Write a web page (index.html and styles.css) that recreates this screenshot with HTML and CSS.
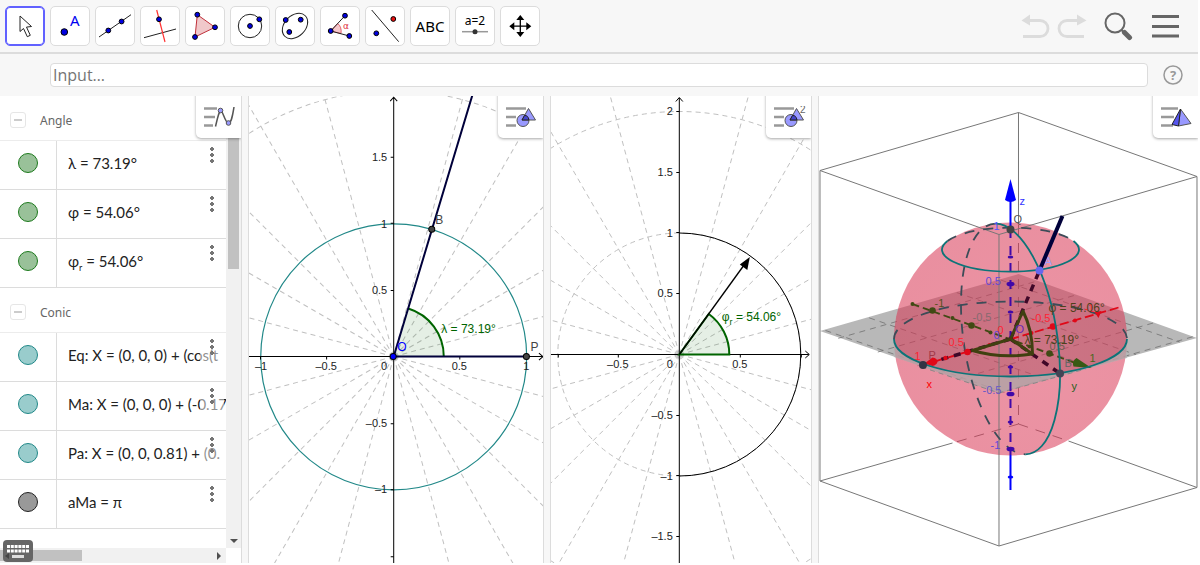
FILE: index.html
```
<!DOCTYPE html>
<html lang="en">

<head>
    <title>Latitude and longitude</title>
    <meta charset="UTF-8">
    <meta name="viewport" content="width=device-width, initial-scale=1.0">
    <link rel="stylesheet" href="styles.css">
</head>

<body>
    <header class="toolbar">
        <nav class="tools">
            <button class="tool selected" aria-label="Move"><svg viewBox="1 1 38 38">
                    <path d="M15 10v15.500l3.500-3 3.800 8.200 3-1.400-3.800-8.200 5-.6z" fill="#fff" stroke="#222" />
                </svg></button>
            <button class="tool" aria-label="Point"><svg viewBox="1 1 38 38">
                    <circle class="dot" cx="14.300" cy="26" r="3.300" />
                    <text x="20" y="20" class="tool-a">A</text>
                </svg></button>
            <button class="tool" aria-label="Line"><svg viewBox="1 1 38 38">
                    <path class="thin" d="M4 31 36 8.700" />
                    <circle class="dot" cx="13.300" cy="24.500" r="2.400" />
                    <circle class="dot" cx="26.600" cy="15.500" r="2.400" />
                </svg></button>
            <button class="tool" aria-label="Perpendicular line"><svg viewBox="1 1 38 38">
                    <path class="thin" d="M4 31.700 36 23" />
                    <path d="M16.700 4 25 36" stroke="#f33" stroke-width="1.200" />
                    <circle class="dot" cx="19" cy="13.300" r="2.400" />
                </svg></button>
            <button class="tool" aria-label="Polygon"><svg viewBox="1 1 38 38">
                    <path d="M12.300 8.700 30 21.300 10 31z" fill="#f0c8ca" stroke="#c0303a" />
                    <circle class="dot" cx="12.300" cy="8.700" r="2.400" />
                    <circle class="dot" cx="30" cy="21.300" r="2.400" />
                    <circle class="dot" cx="10" cy="31" r="2.400" />
                </svg></button>
            <button class="tool" aria-label="Circle with center"><svg viewBox="1 1 38 38">
                    <circle class="thin" cx="20" cy="20" r="11.700" />
                    <circle class="dot" cx="20" cy="20" r="2.400" />
                    <circle class="dot" cx="29.300" cy="13.300" r="2.400" />
                </svg></button>
            <button class="tool" aria-label="Ellipse"><svg viewBox="1 1 38 38">
                    <ellipse class="thin" cx="20" cy="20" rx="14.500" ry="10.500" transform="rotate(-45 20 20)" />
                    <circle class="dot" cx="10.700" cy="14" r="2.400" />
                    <circle class="dot" cx="14.300" cy="26" r="2.400" />
                    <circle class="dot" cx="25.700" cy="13.700" r="2.400" />
                </svg></button>
            <button class="tool" aria-label="Angle"><svg viewBox="1 1 38 38">
                    <path d="M10.700 25 17.700 17.500Q22 21 21 27.500z" fill="#f6c8cc" stroke="#e0404c" stroke-width=".8" />
                    <path class="thin" d="M25 9.700 10.700 25 29.300 30" />
                    <circle class="dot" cx="10.700" cy="25" r="2.400" />
                    <circle class="dot" cx="25" cy="9.700" r="2.400" />
                    <circle class="dot" cx="29.300" cy="30" r="2.400" />
                    <text x="23" y="23" class="tool-alpha">α</text>
                </svg></button>
            <button class="tool" aria-label="Reflect about line"><svg viewBox="1 1 38 38">
                    <path class="thin" d="M6.700 4 33.700 35.700" />
                    <circle class="dot" cx="11.300" cy="27.300" r="2.400" />
                    <circle class="dot red" cx="28.300" cy="13" r="2.400" />
                </svg></button>
            <button class="tool" aria-label="Text"><svg viewBox="1 1 38 38">
                    <text x="20" y="26" class="tool-abc">ABC</text>
                </svg></button>
            <button class="tool" aria-label="Slider"><svg viewBox="1 1 38 38">
                    <text x="20" y="19" class="tool-slider">a=2</text>
                    <path d="M7 25.700H33" stroke="#999" stroke-width="1.500" />
                    <circle cx="20" cy="25.700" r="2.500" fill="#333" />
                </svg></button>
            <button class="tool" aria-label="Move graphics view"><svg viewBox="1 1 38 38">
                    <path d="M20.300 12V28M12 20.200H29" stroke="#000" stroke-width="1.300" />
                    <path d="M20.300 9l4 5h-8zM20.300 31l4-5h-8zM9.300 20.200l5-4v8zM31.300 20.200l-5-4v8z" fill="#000" />
                </svg></button>
        </nav>
        <div class="actions">
            <button class="plain" aria-label="Undo"><svg width="30" height="26" viewBox="0 0 30 26">
                    <path d="M8 7.500H19a8 8 0 0 1 0 16H2" fill="none" stroke="#dcdcdc" stroke-width="2.800" />
                    <path d="M.5 7.500 9 1.500v11z" fill="#dcdcdc" />
                </svg></button>
            <button class="plain" aria-label="Redo"><svg width="30" height="26" viewBox="0 0 30 26">
                    <path d="M22 7.500H10a8 8 0 0 0 0 16H27" fill="none" stroke="#dcdcdc" stroke-width="2.800" />
                    <path d="M29.500 7.500 20 1.500v11z" fill="#dcdcdc" />
                </svg></button>
            <button class="plain search" aria-label="Search"><svg width="30" height="30" viewBox="0 0 30 30">
                    <circle cx="11" cy="12" r="9.500" fill="none" stroke="#666" stroke-width="2" />
                    <path d="M17 18.500 20 21.500" stroke="#666" stroke-width="2" />
                    <path d="M20.500 21.500 25.500 26.500" stroke="#666" stroke-width="5" stroke-linecap="round" />
                </svg></button>
            <button class="plain menu" aria-label="Menu"><svg width="28" height="24" viewBox="0 0 28 24">
                    <path d="M0 2.500H27M0 12.500H27M0 22H27" stroke="#666" stroke-width="3" />
                </svg></button>
        </div>
    </header>

    <div class="input-bar">
        <input type="text" class="formula" placeholder="Input…" aria-label="Input">
        <button class="plain help" aria-label="Help"><svg width="20" height="20" viewBox="0 0 20 20">
                <circle cx="10" cy="10" r="9" fill="none" stroke="#999" stroke-width="1.500" />
                <text x="10" y="15">?</text>
            </svg></button>
    </div>

    <main class="views">
        <section class="view algebra">
            <div class="list">
                <div class="group"><button class="collapse" aria-label="Collapse Angle"></button>Angle</div>
                <div class="row"><span class="cell"><i class="marble green"></i></span><span class="value">λ = 73.19°</span><button class="more" aria-label="More"></button></div>
                <div class="row"><span class="cell"><i class="marble green"></i></span><span class="value">φ = 54.06°</span><button class="more" aria-label="More"></button></div>
                <div class="row"><span class="cell"><i class="marble green"></i></span><span class="value">φ<sub>r</sub> = 54.06°</span><button class="more" aria-label="More"></button></div>
                <div class="group"><button class="collapse" aria-label="Collapse Conic"></button>Conic</div>
                <div class="row"><span class="cell"><i class="marble teal"></i></span><span class="value">Eq: X = (0, 0, 0) + (cos(t</span><button class="more" aria-label="More"></button></div>
                <div class="row"><span class="cell"><i class="marble teal"></i></span><span class="value">Ma: X = (0, 0, 0) + (-0.17</span><button class="more" aria-label="More"></button></div>
                <div class="row"><span class="cell"><i class="marble teal"></i></span><span class="value">Pa: X = (0, 0, 0.81) + (0.</span><button class="more" aria-label="More"></button></div>
                <div class="row"><span class="cell"><i class="marble gray"></i></span><span class="value">aMa = π</span><button class="more" aria-label="More"></button></div>
            </div>
            <div class="vscroll"><i class="thumb"></i><i class="arrow-down"></i></div>
            <div class="hscroll"><i class="thumb"></i><i class="arrow-right"></i></div>
            <button class="keyboard" aria-label="Keyboard"><svg width="30" height="22" viewBox="0 0 30 22">
                    <path d="M4 6.500H26M4 11H26" stroke="#fff" stroke-width="3.200" stroke-dasharray="3 .8" />
                    <path d="M9 16.500H21" stroke="#ddd" stroke-width="3" />
                    <path d="M6 13v6l-4-3z" fill="#444" />
                </svg></button>
            <button class="style-button" aria-label="Algebra settings"><svg width="32" height="22" viewBox="0 0 32 22">
                    <path class="bars" d="M0 2.500H13M0 11H11M0 19.500H9" />
                    <path d="M11.500 20.500C14 10 15 5 17 5s4 12 7.500 12c3 0 4-7 5.500-16" fill="none" stroke="#555" stroke-width="1.500" />
                    <circle class="mark" cx="16.500" cy="4.500" r="2.300" />
                    <circle class="mark" cx="24.500" cy="17" r="2.300" />
                </svg></button>
        </section>

        <section class="view graphics-1">
            <svg class="canvas" viewBox="249 96 294 467" preserveAspectRatio="xMidYMid slice">
                <defs>
                    <path id="quarter" d="M0 0 580 155M0 0 520 300M0 0 424 424M0 0 300 520M0 0 155 580" />
                    <g id="spokes" class="grid">
                        <use href="#quarter" />
                        <use href="#quarter" transform="rotate(90)" />
                        <use href="#quarter" transform="rotate(180)" />
                        <use href="#quarter" transform="rotate(270)" />
                    </g>
                </defs>
                <use href="#spokes" x="393.500" y="356.500" />
                <circle class="grid" cx="393.500" cy="356.500" r="265.500" />
                <path d="M393.500 356.500H443.500A50 50 0 0 0 408 308.600z" fill="#006400" fill-opacity=".1" />
                <path d="M443.500 356.500A50 50 0 0 0 408 308.600" fill="none" stroke="#006400" stroke-width="2" />
                <circle cx="393.500" cy="356.800" r="132.800" fill="none" stroke="#218888" stroke-width="1.200" />
                <path class="axis" d="M393.500 563V98M249 356.500H542M390 101.500 393.500 97.500 397 101.500M538.500 353 542.500 356.500 538.500 360" />
                <path class="axis" d="M390.500 157.500H393.500M390.500 223.500H393.500M390.500 290.500H393.500M390.500 423.500H393.500M390.500 489.500H393.500M390.500 556.500H393.500M260.500 356.500V359.500M326.500 356.500V359.500M459.500 356.500V359.500M526.500 356.500V359.500" />
                <path d="M472.500 94 393.500 356.500H526" fill="none" stroke="#00003a" stroke-width="2" />
                <g class="ticks end">
                    <text x="387" y="161">1.5</text>
                    <text x="387" y="228">1</text>
                    <text x="387" y="294">0.5</text>
                    <text x="387" y="427">–0.5</text>
                    <text x="387" y="493">–1</text>
                    <text x="387" y="370">0</text>
                </g>
                <g class="ticks mid">
                    <text x="261" y="370">–1</text>
                    <text x="326" y="370">–0.5</text>
                    <text x="459" y="370">0.5</text>
                    <text x="526" y="370">1</text>
                </g>
                <circle class="point" cx="431.500" cy="229.500" r="3" />
                <circle class="point" cx="526" cy="356.500" r="3" />
                <circle class="point blue" cx="393" cy="356.500" r="3" />
                <g class="names">
                    <text x="435" y="224">B</text>
                    <text x="530" y="351">P</text>
                    <text x="397" y="351" fill="#00f">O</text>
                    <text x="441" y="333" fill="#006400">λ = 73.19°</text>
                </g>
            </svg>
            <button class="style-button" aria-label="Graphics settings"><svg width="32" height="22" viewBox="0 0 32 22">
                    <path class="bars" d="M0 2.500H20M0 11H10M0 19.500H10" />
                    <circle class="mark" cx="17" cy="14.500" r="6" />
                    <path class="mark" d="M22.500 2.500 29.500 14H16z" />
                    <path d="M18.500 9.500Q22 9 23 14H16z" fill="#44c" stroke="#222" />
                </svg></button>
        </section>

        <section class="view graphics-2">
            <svg class="canvas" viewBox="551 96 260 467" preserveAspectRatio="xMidYMid slice">
                <use href="#spokes" x="679.500" y="354.500" />
                <circle class="grid" cx="679.500" cy="354.500" r="121.500" />
                <circle class="grid" cx="679.500" cy="354.500" r="243" />
                <path class="axis" d="M679.500 563V98M551 354.500H809M676 101.500 679.500 97.500 683 101.500M805.500 351 809.500 354.500 805.500 358" />
                <path class="axis" d="M676.500 111.500H679.500M676.500 172.500H679.500M676.500 232.500H679.500M676.500 293.500H679.500M676.500 415.500H679.500M676.500 475.500H679.500M676.500 536.500H679.500M558.500 354.500V357.500M618.500 354.500V357.500M740.500 354.500V357.500M801.500 354.500V357.500" />
                <path d="M679.500 354.500H729.500A50 50 0 0 0 709 314z" fill="#006400" fill-opacity=".1" stroke="#006400" stroke-width="2" />
                <path d="M679.500 233A121.500 121.500 0 0 1 679.500 476" fill="none" stroke="#000" />
                <path d="M679.500 354.500 745 264" stroke="#000" stroke-width="1.300" />
                <path d="M750 257 747.500 270 740 264.500z" fill="#000" />
                <g class="ticks end">
                    <text x="673" y="115">2</text>
                    <text x="673" y="176">1.5</text>
                    <text x="673" y="237">1</text>
                    <text x="673" y="297">0.5</text>
                    <text x="673" y="419">–0.5</text>
                    <text x="673" y="480">–1</text>
                    <text x="673" y="540">–1.5</text>
                    <text x="673" y="368">0</text>
                </g>
                <g class="ticks mid">
                    <text x="618" y="368">–0.5</text>
                    <text x="740" y="368">0.5</text>
                </g>
                <g class="names">
                    <text x="722" y="321" fill="#006400">φ<tspan dy="4" font-size="9">r</tspan><tspan dy="-4"> = 54.06°</tspan></text>
                </g>
            </svg>
            <button class="style-button" aria-label="Graphics 2 settings"><svg width="32" height="22" viewBox="0 0 32 22">
                    <path class="bars" d="M0 2.500H20M0 11H10M0 19.500H10" />
                    <circle class="mark" cx="17" cy="14.500" r="6" />
                    <path class="mark" d="M22.500 2.500 29.500 14H16z" />
                    <path d="M18.500 9.500Q22 9 23 14H16z" fill="#44c" stroke="#222" />
                    <text x="26" y="7" class="index">2</text>
                </svg></button>
        </section>

        <section class="view graphics-3d">
            <svg class="canvas" viewBox="818 96 380 467" preserveAspectRatio="xMidYMid slice">
                <defs>
                    <radialGradient id="ball" cx=".6" cy=".6" r=".6">
                        <stop offset="0" stop-color="#dc3c5a" />
                        <stop offset="1" stop-color="#d83452" />
                    </radialGradient>
                </defs>
                <!-- ground plane, with its grid in plane coordinates -->
                <path d="M819.500 331 1018 274 1196.500 338 998.500 393z" fill="#b8b8b8" />
                <g class="ground" transform="matrix(89.500 31 99 -28.500 1008 334.500)">
                    <path d="M-1-.945H1M-1-.503H1M-1-.06H1M-1 .382H1M-1 .825H1M.974-1V1M.531-1V1M.089-1V1M-.354-1V1M-.796-1V1" />
                </g>
                <!-- bounding box -->
                <g class="box">
                    <path d="M819.500 481 952 443M1068 441 1196.500 487.500" />
                    <path d="M1018 424 952 443M1018 424 1068 441M1018 225V424" stroke-dasharray="10 8" />
                </g>
                <circle cx="1010" cy="339" r="116.500" fill="url(#ball)" fill-opacity=".55" />
                <path d="M893.500 339A116.500 37.500 0 0 0 1126.500 339V358L998.500 393 893.500 357z" fill="#b4b4b4" fill-opacity=".7" />
                <path class="edge" d="M921 367 998.500 393 1085 369" />
                <g class="box">
                    <path d="M1018 112.500V224" />
                    <path d="M819.500 170.500 1018 112.500 1196.500 176.500 998.500 234.500zM819.500 170.500V481L998.500 546 1196.500 487.500V176.500M998.500 234.500V546" />
                </g>
                <!-- hidden halves of the circles -->
                <g class="hidden-arc">
                    <path d="M893.500 339A116.500 37.500 0 0 1 1126.500 339" />
                    <path d="M947 241A68.500 22 0 0 1 1073 241" />
                    <path d="M-.303.953A1 1 0 0 1 .303-.953" transform="matrix(49.500 34.500 0 -110 1010 339)" />
                </g>
                <!-- y axis -->
                <path d="M912 304 1075 363" stroke="#404a14" stroke-width="1.800" stroke-dasharray="7 4" />
                <g fill="#404a14">
                    <circle cx="912" cy="304" r="2" />
                    <circle cx="932" cy="310.500" r="3.300" />
                    <circle cx="952" cy="318" r="2" />
                    <circle cx="971" cy="325.500" r="3.300" />
                    <circle cx="990" cy="332.500" r="2" />
                    <circle cx="1029" cy="346.500" r="2" />
                    <circle cx="1049" cy="353.500" r="3.300" />
                    <path d="M1091 368 1073 366.500Q1071 361 1076 358z" fill="#385a14" />
                </g>
                <!-- x axis -->
                <path d="M1118 307.500 922 365" stroke="#e00818" stroke-width="1.800" stroke-dasharray="9 4" />
                <g fill="#e00818">
                    <path d="M1094 312 1101 311 1098 318z" />
                    <circle cx="1074.500" cy="320.500" r="2" />
                    <circle cx="1052.500" cy="326.500" r="3.300" />
                    <circle cx="1031" cy="333" r="2" />
                    <circle cx="989" cy="345" r="2" />
                </g>
                <path class="segment" d="M1010 339 922 365M1010 339 1059.500 373.500M1010 339 1039 270.500" />
                <g fill="#e00818">
                    <circle cx="967" cy="352" r="3.300" />
                    <circle cx="945" cy="358" r="2.200" />
                    <path d="M924 363.500 932 357.500Q937 358 937 362 936 365 932 366z" />
                </g>
                <!-- z axis -->
                <path d="M1010 229V455" stroke="#4008a8" stroke-width="2" stroke-dasharray="9 8" />
                <path d="M1010 200V229M1010 455V490" stroke="#00f" stroke-width="2" />
                <path d="M1010 179 1015.500 200Q1010 204 1004.500 200z" fill="#00f" />
                <g fill="#4008a8">
                    <ellipse cx="1010" cy="257" rx="2.800" ry="1.600" />
                    <ellipse cx="1010" cy="284" rx="4" ry="2.300" />
                    <ellipse cx="1010" cy="312" rx="2.800" ry="1.600" />
                    <ellipse cx="1010" cy="367" rx="2.800" ry="1.600" />
                    <ellipse cx="1010" cy="394" rx="4" ry="2.300" />
                    <ellipse cx="1010" cy="422" rx="2.800" ry="1.600" />
                    <ellipse cx="1010" cy="449" rx="4" ry="2.300" />
                    <ellipse cx="1010" cy="477" rx="2.800" ry="1.600" fill="#00f" />
                </g>
                <!-- the two angles -->
                <path class="angle" d="M1010 339 972 350.500Q1000 359 1032 354zM1010 339 1022.500 311Q1032 330 1032 354z" />
                <!-- visible halves of the circles -->
                <g class="arc">
                    <path d="M893.500 339A116.500 37.500 0 0 0 1126.500 339" />
                    <path d="M947 241A68.500 22 0 1 0 1073 241" />
                    <path d="M-.303.953A1 1 0 0 0 .303-.953" transform="matrix(49.500 34.500 0 -110 1010 339)" />
                </g>
                <g class="names small">
                    <text x="1019" y="205" fill="#33f">z</text>
                    <text x="1013" y="223" fill="#555">Q</text>
                    <text x="993" y="230" fill="#55f">1</text>
                    <text x="985" y="285" fill="#6448d8">0.5</text>
                    <text x="972" y="321" fill="#866a70">-0.5</text>
                    <text x="934" y="307" fill="#58501c">-1</text>
                    <text x="1031" y="322" fill="#f23">-0.5</text>
                    <text x="1084" y="312" fill="#f23">-1</text>
                    <text x="948" y="346" fill="#f23">0.5</text>
                    <text x="997" y="334" fill="#f23">0</text>
                    <text x="993" y="339" fill="#6448d8">0</text>
                    <text x="1015" y="333" fill="#6428b8">O</text>
                    <text x="1049" y="350" fill="#706050">0.5</text>
                    <text x="1064" y="367" fill="#666">B</text>
                    <text x="1044" y="265" fill="#a0a0ff">A</text>
                    <text x="1089" y="362" fill="#486820">1</text>
                    <text x="914" y="360" fill="#f23">1</text>
                    <text x="928" y="359" fill="#a03848">P</text>
                    <text x="926" y="388" fill="#f00">x</text>
                    <text x="1071" y="390" fill="#286020">y</text>
                    <text x="982" y="394" fill="#6458c8">-0.5</text>
                    <text x="990" y="449" fill="#6448d8">-1</text>
                </g>
                <g class="names" fill="#50401c">
                    <text x="1048" y="312">φ = 54.06°</text>
                    <text x="1024" y="344">λ = 73.19°</text>
                </g>
                <path d="M1039 270.500 1062 216" stroke="#00003a" stroke-width="4" />
                <circle cx="1010" cy="229.500" r="4" fill="#444" />
                <circle cx="1039" cy="270.500" r="4" fill="#66e" />
                <circle cx="922.500" cy="365" r="4" fill="#334" />
                <circle cx="1059.500" cy="373.500" r="4" fill="#445" />
            </svg>
            <button class="style-button" aria-label="3D graphics settings"><svg width="32" height="22" viewBox="0 0 32 22">
                    <path class="bars" d="M0 2.500H17M0 11H13M0 19.500H12" />
                    <path d="M19.500 3 30 17.500 17.500 20z" fill="#99f" stroke="#555" />
                    <path d="M19.500 3 17.500 20 11 18.500z" fill="#55e" stroke="#222" />
                </svg></button>
        </section>
    </main>
</body>

</html>
```
FILE: styles.css
```
* {
    box-sizing: border-box;
}

body {
    display: flex;
    flex-direction: column;
    height: 100vh;
    margin: 0;
    /* Thin white frame on the right and the bottom. */
    padding: 0 2px 2px 0;
    overflow: hidden;
    background: #fff;
    color: #222;
    font-family: "Noto Sans", "Open Sans", sans-serif;
}

button {
    padding: 0;
    border: 0;
    background: none;
    cursor: pointer;
}

svg {
    display: block;
}

.toolbar {
    display: flex;
    justify-content: space-between;
    padding: 6px 18px 6px 5px;
    background: #f7f7f7;
    border-bottom: 2px solid #dcdcdc;
}

.tools {
    display: flex;
    gap: 5px;
}

.tool {
    width: 40px;
    height: 40px;
    background: #fff;
    border: 1px solid #dcdcdc;
    border-radius: 5px;
}

.tool.selected {
    border-color: #6161ff;
    box-shadow: inset 0 0 0 1px #6161ff;
}

.thin {
    fill: none;
    stroke: #222;
}

.dot {
    fill: #0000e0;
    stroke: #000;
}

.dot.red {
    fill: #e81010;
}

.tool-a {
    fill: #0000f0;
    font: 15px "Noto Sans", sans-serif;
}

.tool-alpha {
    fill: #e0303c;
    font: 9px "DejaVu Sans", sans-serif;
}

.tool-abc,
.tool-slider {
    font: 15px "Noto Sans", sans-serif;
    text-anchor: middle;
}

.tool-slider {
    font-size: 12px;
}

.actions {
    display: flex;
    align-items: center;
    gap: 6px;
}

.search {
    margin-left: 11px;
}

.menu {
    margin-left: 12px;
}

.input-bar {
    display: flex;
    align-items: center;
    gap: 15px;
    height: 42px;
    padding: 0 15px 0 50px;
    background: #f7f7f7;
}

.formula {
    flex: 1;
    height: 24px;
    padding: 0 2px;
    border: 1px solid #dcdcdc;
    border-radius: 4px;
    background: #fff;
    font: 16px "Open Sans", sans-serif;
}

.formula::placeholder {
    color: #757575;
}

.help text {
    fill: #999;
    font: bold 13px "Noto Sans", sans-serif;
    text-anchor: middle;
}

.views {
    display: flex;
    flex: 1;
    gap: 6px;
    min-height: 0;
    background: #f7f7f7;
}

.view {
    position: relative;
    min-width: 0;
    overflow: hidden;
    background: #fff;
    border: solid #dcdcdc;
    border-width: 0 1px;
}

.algebra {
    display: grid;
    grid-template: minmax(0, 1fr) 15px / minmax(0, 1fr) 15px;
    flex: none;
    width: 242px;
    border-left: 0;
}

.graphics-1 {
    flex: 296;
}

.graphics-2 {
    flex: 261;
}

.graphics-3d {
    flex: 381;
    border-right: 0;
}

.canvas {
    width: 100%;
    height: 100%;
}

/* Algebra list */
.list {
    overflow: hidden;
}

.group {
    display: flex;
    align-items: center;
    gap: 14px;
    height: 45px;
    padding: 4px 0 0 10px;
    border-bottom: 1px solid #ececec;
    color: #666;
    font-size: 12px;
}

.collapse {
    width: 16px;
    height: 16px;
    border: 1px solid #e6e6e6;
    border-radius: 3px;
    background: linear-gradient(#ccc, #ccc) center / 8px 2px no-repeat;
}

.row {
    display: flex;
    position: relative;
    height: 49px;
    border-bottom: 1px solid #dcdcdc;
}

.cell {
    display: flex;
    align-items: center;
    justify-content: center;
    flex: none;
    width: 57px;
    padding-bottom: 4px;
    border-right: 1px solid #dcdcdc;
}

.marble {
    width: 20px;
    height: 20px;
    border: 1px solid;
    border-radius: 50%;
}

.green {
    background: #99c199;
    border-color: #1d7a1d;
}

.teal {
    background: #99cccc;
    border-color: #218888;
}

.gray {
    background: #999;
    border-color: #222;
}

.value {
    padding-left: 11px;
    font: 15px/44px Lato, "Noto Sans", sans-serif;
    white-space: nowrap;
}

.value sub {
    font-size: 9px;
    line-height: 1;
}

/* Three dots on a veil that fades the end of a long value. */
.more {
    position: absolute;
    top: 3px;
    right: 2px;
    width: 24px;
    height: 40px;
    background: radial-gradient(circle at 12px 5px, #757575 2px, transparent 2px),
        radial-gradient(circle at 12px 11px, #757575 2px, transparent 2px),
        radial-gradient(circle at 12px 17px, #757575 2px, transparent 2px),
        rgba(255, 255, 255, .5);
}

.vscroll,
.hscroll {
    display: flex;
    justify-content: space-between;
    background: #f1f1f1;
}

.vscroll {
    flex-direction: column;
    align-items: center;
    padding-bottom: 5px;
}

.hscroll {
    grid-row: 2;
    align-items: center;
    padding-right: 5px;
}

.thumb {
    background: #c1c1c1;
}

.vscroll .thumb {
    width: 11px;
    height: 173px;
}

.hscroll .thumb {
    width: 82px;
    height: 11px;
}

.arrow-down,
.arrow-right {
    border: 4px solid transparent;
}

.arrow-down {
    border-top-color: #505050;
    border-bottom: 0;
}

.arrow-right {
    border-left-color: #505050;
    border-right: 0;
}

.keyboard {
    position: absolute;
    bottom: 1px;
    left: 3px;
    background: #666;
    border-radius: 4px;
}

.style-button {
    position: absolute;
    top: -4px;
    right: 0;
    width: 45px;
    height: 46px;
    padding: 4px 0 0 8px;
    background: #fff;
    border-radius: 0 0 0 5px;
    box-shadow: 0 1px 3px rgba(0, 0, 0, .35);
}

.bars {
    stroke: #999;
    stroke-width: 2.5px;
}

.mark {
    fill: #9999ff;
    stroke: #555;
}

.index {
    fill: #666;
    font: 10px "Liberation Sans", sans-serif;
}

/* Plane geometry */
.grid {
    fill: none;
    stroke: #c0c0c0;
    stroke-dasharray: 5 4;
}

.axis {
    fill: none;
    stroke: #000;
}

.point {
    fill: #444;
    stroke: #000;
}

.point.blue {
    fill: #00f;
}

.ticks {
    fill: #222;
    font: 11px "Liberation Sans", sans-serif;
}

.ticks.end {
    text-anchor: end;
}

.ticks.mid {
    text-anchor: middle;
}

.names {
    font: 12px "Liberation Sans", sans-serif;
}

.names.small {
    font-size: 11px;
}

.graphics-1 .names {
    fill: #444;
}

/* Space geometry */
.ground path,
.hidden-arc path,
.arc path {
    fill: none;
    vector-effect: non-scaling-stroke;
}

.ground path {
    stroke: #666;
    stroke-dasharray: 6 5;
    stroke-width: .7px;
}

.edge {
    fill: none;
    stroke: #888;
    stroke-dasharray: 5 4;
}

.box path {
    fill: none;
    stroke: #777;
}

.hidden-arc path {
    stroke: #3c4c58;
    stroke-width: 1.8px;
    stroke-dasharray: 10 9;
}

.arc path {
    stroke: #0c7478;
    stroke-width: 1.8px;
}

.segment {
    stroke: #400828;
    stroke-width: 3.5px;
    stroke-dasharray: 7 6;
}

.angle {
    fill: none;
    stroke: #404010;
    stroke-width: 3px;
    stroke-linejoin: round;
}
```
